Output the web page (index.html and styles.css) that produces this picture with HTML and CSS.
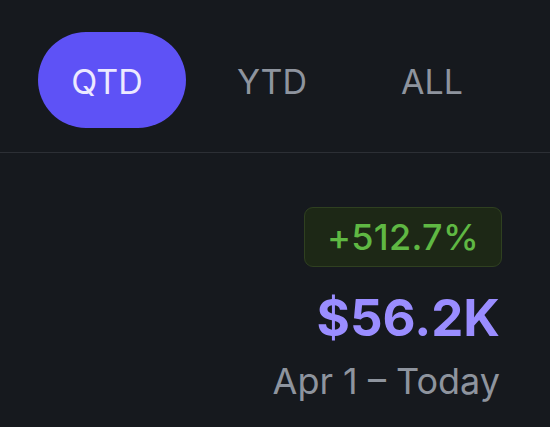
FILE: index.html
```html
<!DOCTYPE html>
<html>
<head>
<meta charset="utf-8">
<link rel="stylesheet" href="styles.css">
</head>
<body>
<div class="screen">
  <div class="tabs">
    <div class="tab active">QTD</div>
    <div class="tab">YTD</div>
    <div class="tab">ALL</div>
  </div>
  <div class="summary">
    <div class="badge">+512.7%</div>
    <div class="amount">$56.2K</div>
    <div class="range">Apr 1 – Today</div>
  </div>
</div>
</body>
</html>
```
FILE: styles.css
```css
html, body {
  margin: 0;
  padding: 0;
  background: #16191e;
}
.screen {
  width: 550px;
  height: 427px;
  overflow: hidden;
  font-family: Inter, "Noto Sans", sans-serif;
  background: #16191e;
}
.tabs {
  display: flex;
  gap: 12px;
  padding: 32px 0 0 38px;
  height: 120px;
  border-bottom: 1px solid #2c2f35;
}
.tab {
  width: 148px;
  height: 96px;
  border-radius: 48px;
  display: flex;
  align-items: center;
  justify-content: center;
  font-size: 34px;
  color: #8e949e;
  padding-top: 2px;
  box-sizing: border-box;
}
.tab.active {
  background: #5e52f6;
  color: #ece9ff;
  padding-right: 10px;
}
.summary {
  display: flex;
  flex-direction: column;
  align-items: flex-end;
  padding: 54px 48px 0 0;
}
.badge {
  height: 58px;
  padding: 0 22px;
  display: flex;
  align-items: center;
  border: 1px solid #2f4020;
  background: #1d2816;
  border-radius: 9px;
  color: #5fb843;
  font-size: 36px;
  font-weight: 500;
  letter-spacing: 0.3px;
}
.amount {
  margin-top: 22px;
  margin-right: 2px;
  font-size: 51px;
  font-weight: 700;
  color: #9a8dff;
  line-height: 58px;
}
.range {
  margin-top: 12px;
  margin-right: 2px;
  font-size: 36px;
  color: #8e949e;
  line-height: 44px;
}
```
